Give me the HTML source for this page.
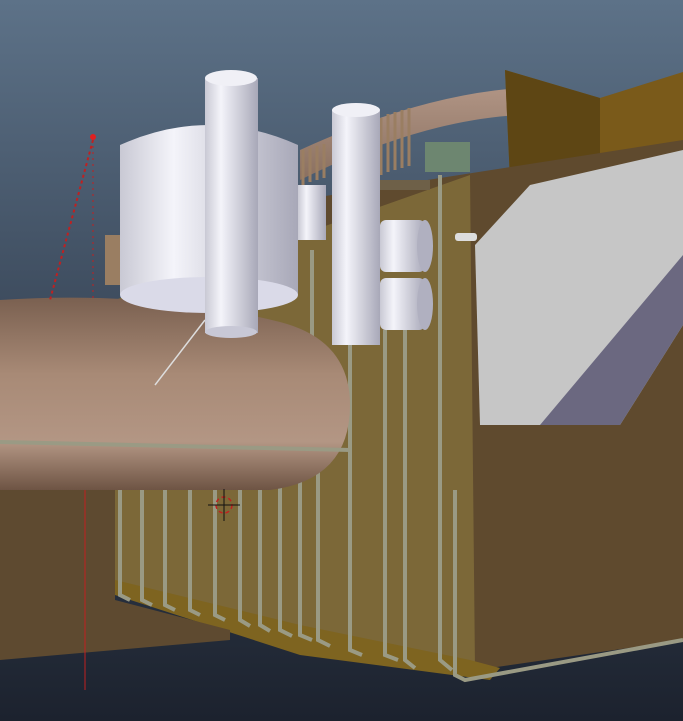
<!DOCTYPE html>
<html><head><style>html,body{margin:0;padding:0;width:683px;height:721px;overflow:hidden;background:#2a3442}</style></head>
<body>
<svg width="683" height="721" viewBox="0 0 683 721" xmlns="http://www.w3.org/2000/svg">
<defs>
<linearGradient id="bg" x1="0" y1="0" x2="0" y2="1">
<stop offset="0" stop-color="#5d7288"/><stop offset="0.45" stop-color="#3c4a5c"/><stop offset="1" stop-color="#1c222e"/></linearGradient>
<linearGradient id="pipe" x1="0" y1="0" x2="0" y2="1">
<stop offset="0" stop-color="#7a6050"/><stop offset="0.4" stop-color="#a88a76"/><stop offset="0.75" stop-color="#b39684"/><stop offset="1" stop-color="#6e5444"/></linearGradient>
<linearGradient id="cyl" x1="0" y1="0" x2="1" y2="0">
<stop offset="0" stop-color="#c9c9d4"/><stop offset="0.3" stop-color="#f4f4fa"/><stop offset="1" stop-color="#a8a8b8"/></linearGradient>
<linearGradient id="arc" x1="0" y1="0" x2="0" y2="1">
<stop offset="0" stop-color="#b09484"/><stop offset="1" stop-color="#8a7060"/></linearGradient>
</defs>
<rect width="683" height="721" fill="url(#bg)"/>
<path d="M300 150 Q420 95 520 88 L520 115 Q420 120 300 180 Z" fill="url(#arc)"/>
<polygon points="505,70 600,98 683,72 683,155 600,165 510,180" fill="#7a5a1a"/>
<polygon points="505,70 600,98 600,165 510,180" fill="#5e4614"/>
<polygon points="300,200 683,140 683,640 490,668 300,640" fill="#5f4a2e"/>
<polygon points="115,300 470,175 475,670 300,640 115,590" fill="#7c6838"/>
<polygon points="115,580 300,625 470,660 500,668 490,680 300,655 115,595" fill="#7e6420"/>
<polygon points="530,185 683,150 683,325 620,425 480,425 475,245" fill="#c6c6c6"/>
<polygon points="683,255 683,325 620,425 540,425" fill="#6b6880"/>
<polygon points="0,490 115,490 115,600 230,630 230,640 0,660" fill="#5e4a30"/>
<g fill="#9a7e62">
<rect x="105" y="235" width="20" height="50"/>
</g>
<g stroke="#9a7e62" stroke-width="3">
<path d="M303 150 V185 M310 148 V182 M317 146 V180 M324 144 V178 M381 118 V175 M388 114 V172 M395 112 V170 M402 110 V168 M409 108 V166"/>
</g>
<rect x="380" y="180" width="50" height="10" fill="#6e6048"/>
<rect x="425" y="142" width="45" height="30" fill="#6d8670"/>
<g stroke="#9a9a84" stroke-width="4" fill="none">
<path d="M120 490 V595 L130 600"/><path d="M142 490 V600 L152 605"/><path d="M165 490 V605 L175 610"/><path d="M190 490 V610 L200 615"/><path d="M215 490 V615 L225 620"/><path d="M240 488 V620 L250 626"/><path d="M260 485 V625 L270 631"/><path d="M280 480 V630 L292 636"/><path d="M300 470 V635 L312 640"/><path d="M312 250 V440"/><path d="M318 460 V640 L330 646"/><path d="M350 345 V650 L362 655"/><path d="M385 330 V655 L398 660"/><path d="M405 300 V660 L415 668"/><path d="M440 175 V660 L452 670"/><path d="M455 490 V675 L465 680 L683 640"/>
</g>
<path d="M0 300 Q150 290 280 322 Q350 340 350 405 Q350 480 270 490 L0 490 Z" fill="url(#pipe)"/>
<path d="M0 442 L350 450" stroke="#9a9a84" stroke-width="4"/>
<line x1="155" y1="385" x2="205" y2="320" stroke="#ddd" stroke-width="1.5"/>
<path d="M120 145 Q209 105 298 145 V295 Q209 320 120 295 Z" fill="url(#cyl)"/>
<ellipse cx="209" cy="295" rx="89" ry="18" fill="#dadae8"/>
<path d="M298 185 H326 V240 H298 Z" fill="url(#cyl)"/>
<rect x="205" y="78" width="53" height="255" fill="url(#cyl)"/>
<ellipse cx="231" cy="78" rx="26" ry="8" fill="#f0f0f6"/>
<ellipse cx="231" cy="332" rx="26" ry="6" fill="#c8c8d6"/>
<rect x="332" y="110" width="48" height="235" fill="url(#cyl)"/>
<ellipse cx="356" cy="110" rx="24" ry="7" fill="#f0f0f6"/>
<rect x="380" y="220" width="45" height="52" rx="6" fill="url(#cyl)"/>
<rect x="380" y="278" width="45" height="52" rx="6" fill="url(#cyl)"/>
<ellipse cx="425" cy="246" rx="8" ry="26" fill="#b0b0c0"/>
<ellipse cx="425" cy="304" rx="8" ry="26" fill="#b0b0c0"/>
<rect x="455" y="233" width="22" height="8" rx="3" fill="#ddd"/>
<line x1="93" y1="140" x2="50" y2="300" stroke="#c02020" stroke-width="2" stroke-dasharray="3,3"/>
<line x1="93" y1="140" x2="93" y2="300" stroke="#c02020" stroke-width="1" stroke-dasharray="2,4"/>
<line x1="85" y1="490" x2="85" y2="690" stroke="#c02020" stroke-width="1"/>
<circle cx="93" cy="137" r="3" fill="#e02020"/>
<circle cx="224" cy="505" r="8" fill="none" stroke="#c02020" stroke-width="1.5" stroke-dasharray="4,3"/>
<path d="M208 505 H240 M224 489 V521" stroke="#111" stroke-width="1"/>
</svg>
</body></html>
